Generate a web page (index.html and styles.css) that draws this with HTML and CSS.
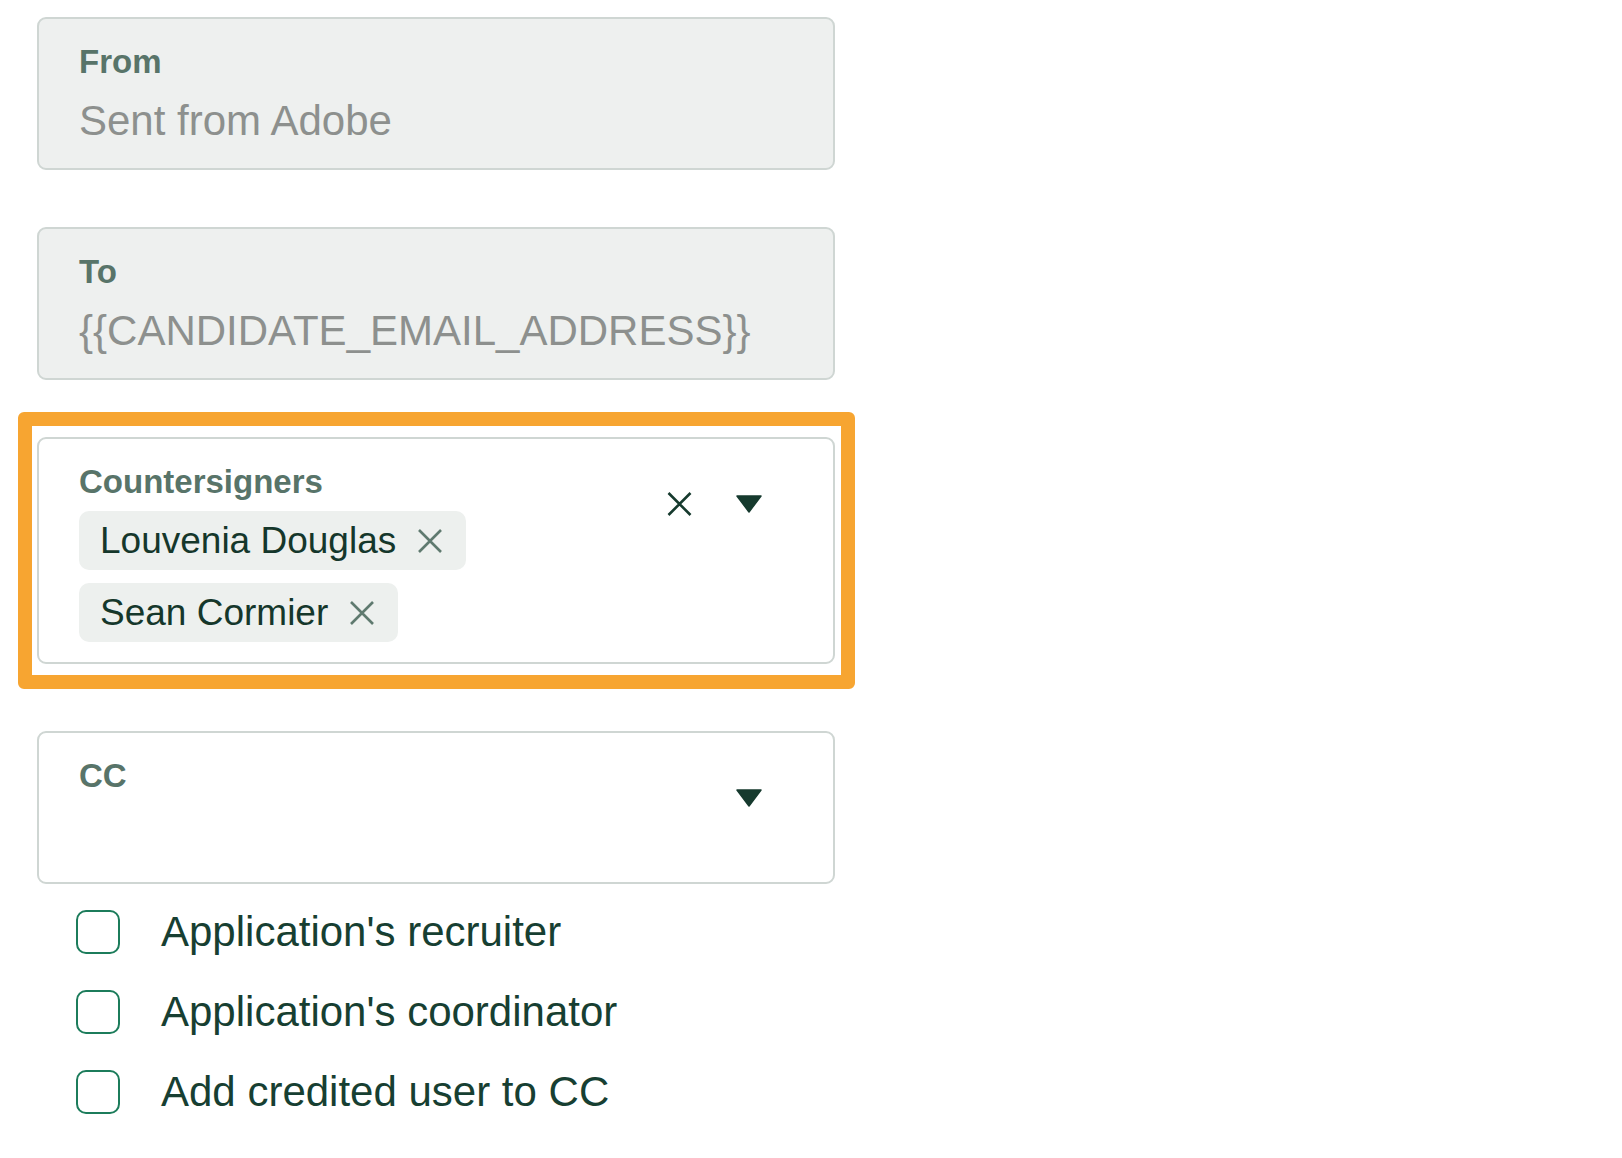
FILE: index.html
```
<!DOCTYPE html>
<html>
    <head>
    <link rel="shortcut icon" href="about:blank">
    <link rel="stylesheet" href="styles.css">
    </head>
    <body>
        <div class="form">

            <div class="field disabled">
                <div class="field-main">
                    <div class="label">From</div>
                    <div class="value">Sent from Adobe</div>
                </div>
            </div>

            <div class="field disabled field-to">
                <div class="field-main">
                    <div class="label">To</div>
                    <div class="value">{{CANDIDATE_EMAIL_ADDRESS}}</div>
                </div>
            </div>

            <div class="highlight">
                <div class="field">
                    <div class="field-main">
                        <div class="label">Countersigners</div>
                        <div class="chips">
                            <div class="chip">Louvenia Douglas
                                <svg class="chip-x" width="24" height="24" viewBox="0 0 24 24"><path d="M1 1 L23 23 M23 1 L1 23"/></svg>
                            </div>
                            <div class="chip">Sean Cormier
                                <svg class="chip-x" width="24" height="24" viewBox="0 0 24 24"><path d="M1 1 L23 23 M23 1 L1 23"/></svg>
                            </div>
                        </div>
                    </div>
                    <div class="indicators">
                        <svg class="clear-x" width="25" height="24" viewBox="0 0 25 24"><path d="M1.5 1 L23.5 23 M23.5 1 L1.5 23"/></svg>
                        <svg class="caret" width="26" height="18" viewBox="0 0 26 18"><path d="M1 1 L25 1 L13 17 Z"/></svg>
                    </div>
                </div>
            </div>

            <div class="field field-cc">
                <div class="field-main">
                    <div class="label">CC</div>
                    <div class="value"></div>
                </div>
                <div class="indicators">
                    <svg class="caret" width="26" height="18" viewBox="0 0 26 18"><path d="M1 1 L25 1 L13 17 Z"/></svg>
                </div>
            </div>

            <div class="options">
                <label class="option"><span class="box"></span>Application's recruiter</label>
                <label class="option"><span class="box"></span>Application's coordinator</label>
                <label class="option"><span class="box"></span>Add credited user to CC</label>
            </div>

        </div>
    </body>
</html>
```

FILE: styles.css
```
body {
    margin: 0;
    background: #ffffff;
    font-family: "Liberation Sans", Arial, sans-serif;
}

.form {
    width: 798px;
    padding: 17px 0 0 37px;
}

.field {
    display: flex;
    box-sizing: border-box;
    border: 2px solid #cfd6d3;
    border-radius: 9px;
    padding: 23px 40px 22px 40px;
    background: #ffffff;
}

.field.disabled {
    background: #eef0ef;
}

.field-to {
    margin-top: 57px;
}

.field-main {
    flex: 1;
}

.label {
    font-size: 33px;
    line-height: 40px;
    font-weight: bold;
    color: #587469;
}

.value {
    margin-top: 14px;
    height: 50px;
    font-size: 42px;
    line-height: 50px;
    color: #8d908e;
}

/* orange box round the countersigners field */
.highlight {
    margin: 32px -20px 0 -19px;
    border: 14px solid #f7a531;
    border-radius: 6px;
    padding: 11px 6px 11px 5px;
}

.highlight .field {
    padding-bottom: 20px;
}

.chips {
    margin-top: 9px;
    display: flex;
    flex-direction: column;
    align-items: flex-start;
    gap: 13px;
}

.chip {
    display: flex;
    align-items: center;
    gap: 22px;
    height: 59px;
    padding: 0 24px 0 21px;
    border-radius: 10px;
    background: #edf0ee;
    font-size: 37px;
    line-height: 59px;
    color: #15372b;
}

.chip-x path {
    stroke: #5f7a6f;
    stroke-width: 2.6;
    fill: none;
}

.indicators {
    display: flex;
    align-items: center;
    gap: 44px;
    height: 84px;
    margin-right: 31px;
}

.clear-x path {
    stroke: #163a2e;
    stroke-width: 2.6;
    fill: none;
}

.caret path {
    fill: #163a2e;
    stroke: #163a2e;
    stroke-width: 1.5;
    stroke-linejoin: round;
}

.field-cc {
    margin-top: 42px;
}

.options {
    margin-top: 26px;
    padding-left: 39px;
    display: flex;
    flex-direction: column;
    gap: 36px;
}

.option {
    display: flex;
    align-items: center;
    gap: 41px;
    height: 44px;
    font-size: 42px;
    line-height: 44px;
    color: #173f32;
}

.box {
    box-sizing: border-box;
    width: 44px;
    height: 44px;
    border: 2.5px solid #1c7c5b;
    border-radius: 10px;
}
```
